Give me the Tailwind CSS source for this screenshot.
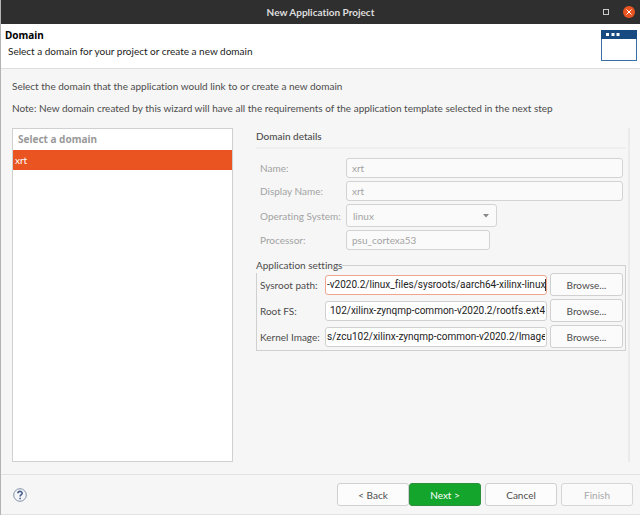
<!DOCTYPE html>
<html lang="en">
<head>
    <meta charset="UTF-8">
    <meta name="viewport" content="width=device-width, initial-scale=1.0">
    <title>New Application Project</title>
    <script src="https://cdn.jsdelivr.net/npm/@tailwindcss/browser@4"></script>
</head>
<body class="bg-[#302f2f]">
    <div class="min-h-screen flex flex-col border-l border-[#b3b3b3] bg-[#f6f6f6] font-['Lato',sans-serif] [font-variant-ligatures:none] text-[10px] leading-4 text-[#4c4c4c]">
        <!-- Title bar -->
        <div class="relative h-6 flex items-center justify-center bg-[#302f2f]">
            <h1 class="font-bold text-[#dedede]">New Application Project</h1>
            <div class="absolute right-[5px] inset-y-0 flex items-center gap-[14px]">
                <button type="button" aria-label="Maximize" class="size-[6px] border border-[#cccccc]"></button>
                <button type="button" aria-label="Close" class="size-3 rounded-full bg-[#e95420]">
                    <svg viewBox="0 0 12 12" class="size-3" fill="none" stroke="#ffffff" stroke-width="1"><path d="M3.500 3.500l5 5M8.500 3.500L3.500 8.500"/></svg>
                </button>
            </div>
        </div>

        <!-- Header -->
        <header class="h-[45px] flex justify-between bg-white border-b border-[#dedede] pl-1 pr-[3px]">
            <div class="pt-[3px] text-[#222222]">
                <h2 class="font-['Noto_Sans',sans-serif] font-bold text-black">Domain</h2>
                <p class="pl-[3px]">Select a domain for your project or create a new domain</p>
            </div>
            <svg viewBox="0 0 36 32" class="w-9 h-8 mt-[6px]">
                <rect x="0.5" y="0.5" width="35" height="30" fill="#ffffff" stroke="#3a6ea5"/>
                <rect x="0" y="0" width="36" height="9" fill="#174a80"/>
                <path d="M5 3h3v3H5zM10.500 3h3v3h-3zM15.500 3h3v3h-3z" fill="#ffffff"/>
            </svg>
        </header>

        <!-- Content -->
        <main class="grow flex flex-col pl-[11px] pr-[10px] pt-[9px] pb-3">
            <p>Select the domain that the application would link to or create a new domain</p>
            <p class="mt-[6px]">Note: New domain created by this wizard will have all the requirements of the application template selected in the next step</p>

            <div class="grow flex mt-3">
                <!-- Domain list -->
                <div class="w-[221px] shrink-0 bg-white border border-[#d0d0d0]">
                    <h3 class="h-[21px] pl-[5px] pt-[2px] font-['Noto_Sans',sans-serif] font-bold text-[#999999]">Select a domain</h3>
                    <button type="button" class="block w-full h-5 pl-[2px] text-left text-white bg-[#e95420]">xrt</button>
                </div>

                <!-- Details -->
                <section class="grow min-w-0 ml-[23px] pr-[2px] border-r-2 border-[#ebebeb]">
                    <h3 class="h-[21px] border-b-2 border-[#eeeeee] font-medium">Domain details</h3>
                    <div class="grid grid-cols-[86px_1fr] items-center gap-y-[3px] pl-1 pr-[3px] mt-[9px] text-[#a3a3a3]">
                        <label for="name">Name:</label>
                        <input id="name" value="xrt" disabled class="h-5 w-full px-[5px] bg-[#fafafa] border border-[#d3d3d3] rounded-[3px]">
                        <label for="displayName">Display Name:</label>
                        <input id="displayName" value="xrt" disabled class="h-5 w-full px-[5px] bg-[#fafafa] border border-[#d3d3d3] rounded-[3px]">
                        <label for="os" class="whitespace-nowrap">Operating System:</label>
                        <div class="relative w-[151px]">
                            <select id="os" disabled class="block appearance-none h-[23px] w-full px-[6px] bg-[#fafafa] border border-[#d3d3d3] rounded-[3px]">
                                <option>linux</option>
                            </select>
                            <svg viewBox="0 0 6 4" class="absolute right-2 top-[10px] w-[6px] h-1" fill="#888888"><path d="M0 0h6L3 3.500z"/></svg>
                        </div>
                        <label for="processor">Processor:</label>
                        <input id="processor" value="psu_cortexa53" disabled class="h-5 w-36 px-[5px] bg-[#fafafa] border border-[#d3d3d3] rounded-[3px]">
                    </div>

                    <fieldset class="mt-[7px] border border-[#d0d0d0] pl-[3px] pr-[2px] pb-[2px]">
                        <legend class="-ml-1">Application settings</legend>
                        <div class="grid grid-cols-[62px_1fr_73px] items-center gap-x-[3px] gap-y-[3px]">
                            <label for="sysroot">Sysroot path:</label>
                            <div class="relative">
                                <input id="sysroot" value="-v2020.2/linux_files/sysroots/aarch64-xilinx-linux" class="block h-5 w-full px-px font-['Roboto',sans-serif] text-right text-[#222222] bg-white border border-[#f0a58c] rounded-[3px]">
                                <span class="absolute right-px top-1 h-3 w-px bg-[#333333]"></span>
                            </div>
                            <button type="button" class="h-[23px] bg-[#fbfbfb] border border-[#d0d0d0] rounded-[3px]">Browse...</button>
                            <label for="rootfs">Root FS:</label>
                            <input id="rootfs" value="102/xilinx-zynqmp-common-v2020.2/rootfs.ext4" class="h-5 w-full px-px font-['Roboto',sans-serif] text-right text-[#222222] bg-white border border-[#d0d0d0] rounded-[3px]">
                            <button type="button" class="h-[23px] bg-[#fbfbfb] border border-[#d0d0d0] rounded-[3px]">Browse...</button>
                            <label for="kernel" class="whitespace-nowrap">Kernel Image:</label>
                            <input id="kernel" value="s/zcu102/xilinx-zynqmp-common-v2020.2/Image" class="h-5 w-full px-px font-['Roboto',sans-serif] text-right text-[#222222] bg-white border border-[#d0d0d0] rounded-[3px]">
                            <button type="button" class="h-[23px] bg-[#fbfbfb] border border-[#d0d0d0] rounded-[3px]">Browse...</button>
                        </div>
                    </fieldset>
                </section>
            </div>
        </main>

        <!-- Footer -->
        <footer class="h-[41px] flex items-center border-y border-[#e2e2e2] pl-3 pr-[7px]">
            <button type="button" aria-label="Help">
                <svg viewBox="0 0 14 14" class="size-[14px]" fill="none">
                    <circle cx="7" cy="7" r="6.300" fill="#f4f6f9" stroke="#8292a8"/>
                    <path d="M4.900 5.300C4.900 2.700 9.200 2.800 9.200 5.200C9.200 6.700 7.100 6.700 7.100 8.600M7.100 9.700v1.500" stroke="#48618a" stroke-width="1.600"/>
                </svg>
            </button>
            <div class="flex ml-auto">
                <button type="button" class="w-[72px] h-[23px] bg-[#fcfcfc] border border-[#d0d0d0] rounded-[3px]">&lt; Back</button>
                <button type="button" class="w-[72px] h-[23px] bg-[#14a52c] border border-[#2c8f3c] rounded-[3px] text-white">Next &gt;</button>
                <button type="button" class="w-[72px] h-[23px] ml-1 bg-[#fcfcfc] border border-[#d0d0d0] rounded-[3px]">Cancel</button>
                <button type="button" disabled class="w-[72px] h-[23px] ml-1 bg-[#fafafa] border border-[#d6d6d6] rounded-[3px] text-[#a8a8a8]">Finish</button>
            </div>
        </footer>
    </div>
</body>
</html>
